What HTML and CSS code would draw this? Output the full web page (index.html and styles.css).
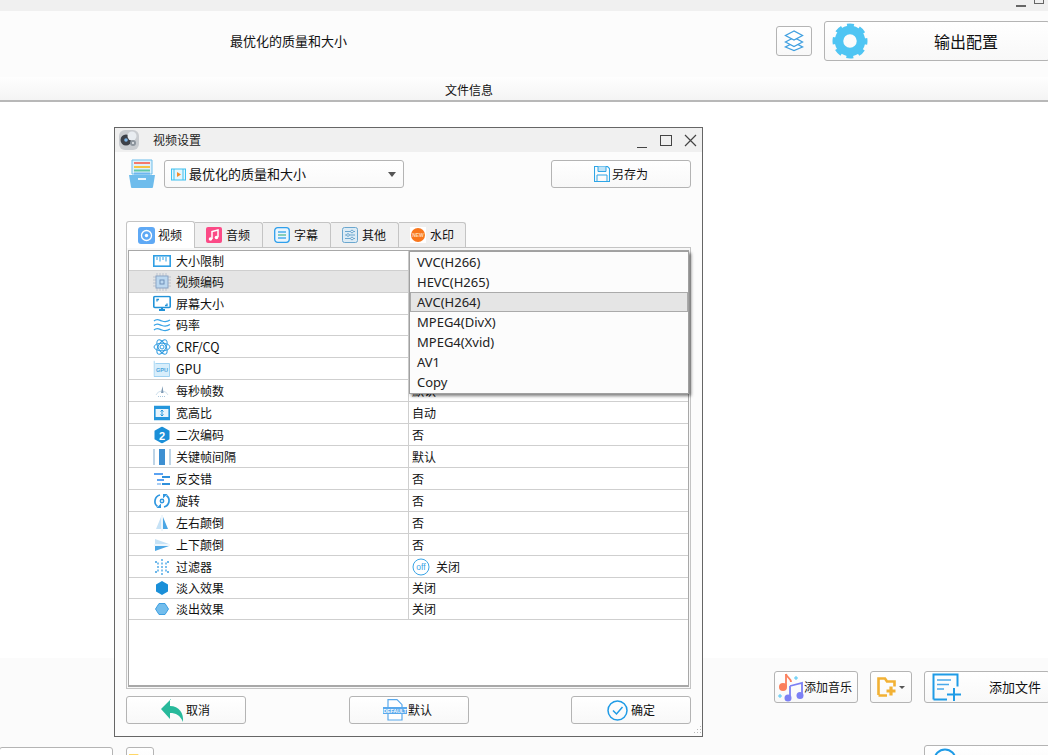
FILE: index.html
```html
<!DOCTYPE html>
<html lang="zh">
<head>
<meta charset="utf-8">
<title>视频设置</title>
<link rel="stylesheet" href="styles.css">
</head>
<body>
<div class="app">
  <header class="winbar">
    <span class="win-min"></span><span class="win-max"></span>
  </header>
  <section class="top">
    <div class="profile-name">最优化的质量和大小</div>
    <button class="btn layers-btn">
      <svg width="24" height="24" viewBox="0 0 24 24" fill="#fff" stroke="#3f9fe0" stroke-width="1.3"><path d="M12 15.500 3.500 20 12 23.500 20.500 20z" transform="translate(0 -2)"/><path d="M12 8.500 3.500 13 12 17.500 20.500 13z"/><path d="M12 2 3.500 6.500 12 11 20.500 6.500z"/></svg>
    </button>
    <button class="btn output-btn">
      <svg class="gear" width="36" height="36" viewBox="0 0 36 36"><circle cx="18" cy="18" r="11" fill="none" stroke="#4fc5f3" stroke-width="8.500"/><circle cx="18" cy="18" r="15.500" fill="none" stroke="#4fc5f3" stroke-width="4" stroke-dasharray="6.800 5.370" stroke-dashoffset="3.400"/></svg>
      <span class="output-label">输出配置</span>
    </button>
  </section>
  <div class="file-tab">文件信息</div>
  <main class="middle"></main>
  <section class="bottom">
    <div class="actions">
      <button class="btn music-btn">
        <svg width="26" height="30" viewBox="0 0 26 30"><path d="M8 2v13" stroke="#fb7f5c" stroke-width="1.800" fill="none"/><path d="M8 2c1 4 5 4 5 8" stroke="#fb7f5c" stroke-width="1.800" fill="none"/><circle cx="5" cy="15" r="4" fill="#fb7f5c"/><path d="M12 14l12-3v13M12 14v12" stroke="#7c80f4" stroke-width="1.800" fill="none"/><circle cx="10" cy="26" r="3.500" fill="#7c80f4"/><circle cx="22" cy="23.500" r="3.500" fill="#7c80f4"/><path d="M18 4v4M16 6h4M2 22v4M0 24h4" stroke="#4fc5f3" stroke-width="1"/></svg>
        <span>添加音乐</span>
      </button>
      <button class="btn folder-btn">
        <svg width="20" height="20" viewBox="0 0 20 20"><path d="M1.500 18V1.500h6.500l2 3h7.500v5M10 18.500H1.500" fill="none" stroke="#f2b134" stroke-width="2.600"/><path d="M14 9.500v9M9.500 14h9" stroke="#f2b134" stroke-width="3.200"/></svg>
        <span class="caret small"></span>
      </button>
      <button class="btn addfile-btn">
        <svg width="30" height="28" viewBox="0 0 30 28" fill="none" stroke="#1f9be6"><path d="M1.500 26.500V1.500h24v12M1.500 26.500H15" stroke-width="2"/><path d="M5 7h14M5 11.500h12M5 16h7" stroke-width="1.600" stroke="#4aa9ea"/><path d="M22 15v13M15 21.500h14" stroke-width="2"/></svg>
        <span class="addfile-label">添加文件</span>
      </button>
    </div>
    <div class="footer-row">
      <div class="path-input"></div>
      <button class="btn open-btn">
        <svg width="24" height="20" viewBox="0 0 24 20"><path d="M1 20V3h9l2 3h11v14z" fill="#ffd766"/></svg>
      </button>
      <button class="btn start-btn">
        <svg width="24" height="24" viewBox="0 0 24 24"><circle cx="12" cy="12" r="10.500" fill="none" stroke="#1f9be6" stroke-width="2"/></svg>
      </button>
    </div>
  </section>

  <div class="dialog">
    <div class="dlg-title">
      <svg class="dlg-logo" width="22" height="22" viewBox="0 0 22 22"><rect x="1" y="1" width="20" height="20" rx="6" fill="#c9ccd0"/><circle cx="8" cy="11" r="5.500" fill="#3c4048"/><circle cx="14" cy="7" r="4.500" fill="#e9edf1"/><circle cx="8" cy="11" r="1.800" fill="#7fb6e8"/><circle cx="15" cy="14" r="3" fill="#8c949c"/><circle cx="15" cy="14" r="1" fill="#eef1f4"/></svg>
      <span class="dlg-caption">视频设置</span>
      <span class="dlg-min"></span>
      <span class="dlg-max"></span>
      <svg class="dlg-close" width="13" height="13" viewBox="0 0 13 13" stroke="#444" stroke-width="1.200"><path d="M1 1l11 11M12 1 1 12"/></svg>
    </div>
    <div class="dlg-body">
      <div class="profile-row">
        <svg class="tray" width="30" height="30" viewBox="0 0 30 30"><path d="M5 1h20v14H5z" fill="#dff1fb" stroke="#6cbdea"/><path d="M7 4h16" stroke="#f47a6c" stroke-width="2"/><path d="M7 8h16" stroke="#f5c443" stroke-width="2"/><path d="M7 11.500h16" stroke="#5fc7a8" stroke-width="2"/><path d="M7 14.500h16" stroke="#6cb6ef" stroke-width="2"/><path d="M2 16h26l-2 12a1 1 0 0 1-1 1H5a1 1 0 0 1-1-1z" fill="#6ebcec"/><rect x="11" y="19" width="8" height="2" fill="#eaf6fd"/></svg>
        <div class="combo">
          <svg width="15" height="15" viewBox="0 0 15 15"><rect x=".5" y="2" width="14" height="11" fill="#e4f6fd" stroke="#3fc0ef"/><path d="M3 2v11M12 2v11" stroke="#3fc0ef"/><path d="M6 5v5l4-2.500z" fill="#f58a2a"/></svg>
          <span class="combo-text">最优化的质量和大小</span>
          <span class="caret"></span>
        </div>
        <button class="btn save-btn">
          <svg width="16" height="16" viewBox="0 0 16 16" fill="none" stroke="#2ea5e6"><path d="M.5 .5h13l2 2v13H.5z" stroke-width="1.100"/><path d="M4 .5v5h8v-5" fill="#bfe3f7"/><path d="M3 15.500V9h10v6.500"/></svg>
          <span>另存为</span>
        </button>
      </div>

      <div class="tabs">
        <div class="tab active">
          <svg width="17" height="17" viewBox="0 0 17 17"><rect width="17" height="17" rx="3" fill="#5fa9f5"/><circle cx="8.500" cy="8.500" r="5" fill="none" stroke="#fff" stroke-width="1.300"/><circle cx="8.500" cy="8.500" r="1.700" fill="#fff"/></svg>
          <span>视频</span>
        </div>
        <div class="tab">
          <svg width="16" height="16" viewBox="0 0 16 16"><rect width="16" height="16" rx="2" fill="#fb4a86"/><path d="M6 12V4.500l6-1.500v7" fill="none" stroke="#fff" stroke-width="1.500"/><circle cx="4.500" cy="12" r="1.800" fill="#fff"/><circle cx="10.500" cy="10.500" r="1.800" fill="#fff"/></svg>
          <span>音频</span>
        </div>
        <div class="tab">
          <svg width="16" height="16" viewBox="0 0 16 16" fill="none"><rect x=".7" y=".7" width="14.600" height="14.600" rx="3" fill="#eaf5fd" stroke="#2e9fec" stroke-width="1.300"/><path d="M4 5h8" stroke="#2e9fec" stroke-width="1.300"/><path d="M4 8h8" stroke="#53b98f" stroke-width="1.300"/><path d="M4 11h8" stroke="#2e9fec" stroke-width="1.300"/></svg>
          <span>字幕</span>
        </div>
        <div class="tab">
          <svg width="16" height="16" viewBox="0 0 16 16" fill="none" stroke="#6ba7cf"><rect x=".5" y=".5" width="15" height="15" rx="2" fill="#dcebf5"/><path d="M3 4.500h10M3 8h10M3 11.500h10"/><circle cx="10" cy="4.500" r="1.300" fill="#fff"/><circle cx="6" cy="8" r="1.300" fill="#fff"/><circle cx="10" cy="11.500" r="1.300" fill="#fff"/></svg>
          <span>其他</span>
        </div>
        <div class="tab">
          <svg width="16" height="16" viewBox="0 0 16 16"><rect width="16" height="16" fill="#fff"/><circle cx="8" cy="8" r="7" fill="#f9761c"/><text x="8" y="9.800" font-size="5" fill="#ffd9b8" text-anchor="middle" font-family="Liberation Sans" font-weight="700">NEW</text></svg>
          <span>水印</span>
        </div>
      </div>

      <div class="pane">
        <div class="grid">
          <div class="row first"><div class="cell name"><svg width="18" height="14" viewBox="0 0 18 14" fill="none" stroke="#2f9fe4"><rect x=".8" y="1.800" width="16.400" height="10.400" stroke-width="1.600"/><path d="M4 3v3M7 3v4.500M10 3v3M13 3v4.500" stroke-width="1"/></svg><span>大小限制</span></div><div class="cell val"></div></div>
          <div class="row current"><div class="cell name"><svg width="18" height="18" viewBox="0 0 18 18" fill="none"><path d="M0 4h18M0 7h18M0 10h18M0 13h18M4 0v18M7 0v18M10 0v18M13 0v18" stroke="#a9b4c6" stroke-width=".7"/><rect x="3" y="3" width="12" height="12" fill="#bcd8f0" stroke="#8aa3c4"/><rect x="7" y="7" width="4" height="4" stroke="#6f8fb8"/></svg><span>视频编码</span></div><div class="cell val"></div></div>
          <div class="row"><div class="cell name"><svg width="18" height="17" viewBox="0 0 18 17" fill="none" stroke="#2092d8"><rect x=".8" y="1" width="16.400" height="11" rx="1" stroke-width="1.600"/><path d="M6 14.500h6" stroke-width="2"/><path d="M9 12v2" stroke-width="2"/><path d="M4 6V4h2M14 8v2h-2" stroke-width="1.300"/></svg><span>屏幕大小</span></div><div class="cell val"></div></div>
          <div class="row short"><div class="cell name"><svg width="18" height="14" viewBox="0 0 18 14" fill="none" stroke="#3aa4e6" stroke-width="1.300"><path d="M1 3c3-3 5-1 8 0s5 1 8-1M1 7.500c3-3 5-1 8 0s5 1 8-1M1 12c3-3 5-1 8 0s5 1 8-1"/></svg><span>码率</span></div><div class="cell val"></div></div>
          <div class="row"><div class="cell name"><svg width="18" height="18" viewBox="0 0 18 18" fill="none" stroke="#2f9be0"><ellipse cx="9" cy="9" rx="8" ry="3.800"/><ellipse cx="9" cy="9" rx="8" ry="3.800" transform="rotate(60 9 9)"/><ellipse cx="9" cy="9" rx="8" ry="3.800" transform="rotate(120 9 9)"/><circle cx="9" cy="9" r="2"/></svg><span class="latin">CRF/CQ</span></div><div class="cell val"></div></div>
          <div class="row"><div class="cell name"><svg width="17" height="17" viewBox="0 0 17 17"><path d="M.5 0v16H16V3H2" fill="#d8eefb" stroke="#9fd2f2"/><text x="8.500" y="11.500" font-size="5.500" fill="#4aa3dc" text-anchor="middle" font-family="Liberation Sans" font-weight="700">GPU</text></svg><span class="latin">GPU</span></div><div class="cell val"></div></div>
          <div class="row"><div class="cell name"><svg width="16" height="14" viewBox="0 0 16 14" fill="none"><path d="M2 11a6.500 6.500 0 0 1 12 0" stroke="#cfe0ec"/><path d="M8.500 2 7 9h2.500z" fill="#7f9ab4"/><path d="M4 12.500h8" stroke="#a8c6dc" stroke-dasharray="1 1"/></svg><span>每秒帧数</span></div><div class="cell val">默认</div></div>
          <div class="row"><div class="cell name"><svg width="16" height="15" viewBox="0 0 16 15"><rect x=".8" y=".8" width="14.400" height="13.400" fill="#e8f4fc" stroke="#2596dc" stroke-width="1.600"/><path d="M1 1h14v2.500H1zM1 11.500h14V14H1z" fill="#2596dc"/><path d="M8 4.500v6M6.500 6 8 4.500 9.500 6M6.500 9 8 10.500 9.500 9" fill="none" stroke="#2596dc"/></svg><span>宽高比</span></div><div class="cell val">自动</div></div>
          <div class="row"><div class="cell name"><svg width="16" height="17" viewBox="0 0 16 17"><path d="M8 0 15.500 4.300v8.400L8 17 .5 12.700V4.300z" fill="#1a8fd8"/><text x="8" y="13" font-size="11" fill="#fff" text-anchor="middle" font-family="Liberation Sans" font-weight="700">2</text></svg><span>二次编码</span></div><div class="cell val">否</div></div>
          <div class="row"><div class="cell name"><svg width="18" height="18" viewBox="0 0 18 18"><path d="M1 1v16M17 1v16" stroke="#a9c6de" stroke-width="1.500"/><rect x="6" y="1" width="6" height="16" fill="#3d8fd1"/></svg><span>关键帧间隔</span></div><div class="cell val">默认</div></div>
          <div class="row"><div class="cell name"><svg width="16" height="14" viewBox="0 0 16 14" stroke-width="2" fill="none"><path d="M0 2h9" stroke="#5aa2f2"/><path d="M8 5h8" stroke="#2f90dc"/><path d="M3 8h7" stroke="#5aa2f2"/><path d="M8 12h8" stroke="#2f90dc"/><path d="M3 12h4" stroke="#a7cdf5"/></svg><span>反交错</span></div><div class="cell val">否</div></div>
          <div class="row"><div class="cell name"><svg width="17" height="17" viewBox="0 0 17 17" fill="none" stroke="#2f97e0" stroke-width="1.700"><path d="M6.500 2.500A6.500 6.500 0 0 0 4 14"/><path d="M10.500 14.500A6.500 6.500 0 0 0 13 3"/><path d="M3 15.500h4.500V11zM14 1.500H9.500V6z" fill="#2f97e0" stroke="none"/><circle cx="8.500" cy="8.500" r="1.700" stroke-width="1.500"/></svg><span>旋转</span></div><div class="cell val">否</div></div>
          <div class="row"><div class="cell name"><svg width="16" height="16" viewBox="0 0 16 16"><path d="M7 2 2 14h5z" fill="#c6e2f6"/><path d="M9 2l5 12H9z" fill="#4ba6e4"/><path d="M8 0v16" stroke="#dcecf8"/></svg><span>左右颠倒</span></div><div class="cell val">否</div></div>
          <div class="row"><div class="cell name"><svg width="16" height="16" viewBox="0 0 16 16"><path d="M1 2v5h14z" fill="#c6e2f6"/><path d="M1 14V9h14z" fill="#4ba6e4"/><path d="M0 8h16" stroke="#dcecf8"/></svg><span>上下颠倒</span></div><div class="cell val">否</div></div>
          <div class="row"><div class="cell name"><svg width="16" height="16" viewBox="0 0 16 16" fill="none" stroke="#3a9fe4" stroke-width="1.300" stroke-dasharray="2 1.500"><path d="M8 0v16"/><path d="M1 3h3v10H1M15 3h-3v10h3"/></svg><span>过滤器</span></div><div class="cell val off"><svg width="18" height="18" viewBox="0 0 18 18"><circle cx="9" cy="9" r="8" fill="#fff" stroke="#3aa4e6"/><text x="9" y="12" font-size="8.500" fill="#3aa4e6" text-anchor="middle" font-family="Liberation Sans">off</text></svg><span>关闭</span></div></div>
          <div class="row short"><div class="cell name"><svg width="14" height="14" viewBox="0 0 14 14"><path d="M7 0 13 3.500v7L7 14 1 10.500v-7z" fill="#1a8fd8"/></svg><span>淡入效果</span></div><div class="cell val">关闭</div></div>
          <div class="row short"><div class="cell name"><svg width="14" height="14" viewBox="0 0 14 14"><path d="M4 1.500h6L13.500 7 10 12.500H4L.5 7z" fill="#73bdec" stroke="#3f9fe0" stroke-linejoin="round"/></svg><span>淡出效果</span></div><div class="cell val">关闭</div></div>
        </div>
      </div>

      <div class="dlg-actions">
        <button class="btn act-btn back">
          <svg width="24" height="24" viewBox="0 0 24 24"><path d="M10 0 0 10l9 10v-6c6 0 10 2 13 9 1-9-4-16-13-16V0z" fill="#28b99b" transform="translate(1 1)"/></svg>
          <span>取消</span>
        </button>
        <button class="btn act-btn tight">
          <svg width="24" height="22" viewBox="0 0 24 22"><path d="M5 8V.7h9l5 5V8M5 15v6h14v-6" fill="#fff" stroke="#5aa9ec" stroke-width="1.200"/><rect y="8" width="24" height="7" fill="#5aa9ec"/><text x="12" y="13.500" font-size="5.200" fill="#fff" text-anchor="middle" font-family="Liberation Sans" font-weight="700">DEFAULT</text></svg>
          <span>默认</span>
        </button>
        <button class="btn act-btn wide">
          <svg width="21" height="21" viewBox="0 0 21 21" fill="none" stroke="#1f9be6"><circle cx="10.500" cy="10.500" r="9.500" stroke-width="1.500"/><path d="M6 10.500l3.500 3.500 6-7" stroke-width="1.500"/></svg>
          <span>确定</span>
        </button>
      </div>
    </div>
    <svg class="grip" width="10" height="10" viewBox="0 0 10 10" fill="#b8b8b8"><rect x="8" y="0" width="1" height="1"/><rect x="5" y="3" width="1" height="1"/><rect x="8" y="3" width="1" height="1"/><rect x="2" y="6" width="1" height="1"/><rect x="5" y="6" width="1" height="1"/><rect x="8" y="6" width="1" height="1"/></svg>

    <ul class="popup">
      <li>VVC(H266)</li>
      <li>HEVC(H265)</li>
      <li class="selected">AVC(H264)</li>
      <li>MPEG4(DivX)</li>
      <li>MPEG4(Xvid)</li>
      <li>AV1</li>
      <li>Copy</li>
    </ul>
  </div>
</div>
</body>
</html>
```
FILE: styles.css
```css
* { box-sizing: border-box; }
html, body { margin: 0; padding: 0; }
body {
  width: 1048px;
  height: 755px;
  overflow: hidden;
  background: #fff;
  color: #111;
  font: 12px/18px "Noto Sans CJK SC", "Noto Sans", sans-serif;
}
.app { position: relative; width: 1048px; height: 755px; display: flex; flex-direction: column; overflow: hidden; }
svg { flex: none; display: block; }

.btn {
  display: flex;
  flex: none;
  align-items: center;
  justify-content: center;
  margin: 0;
  padding: 0;
  color: #111;
  font: inherit;
  border: 1px solid #b4b4b4;
  border-radius: 3px;
  background: linear-gradient(#ffffff, #f8f8f8);
}

/* main window */
.winbar {
  height: 11px;
  flex: none;
  background: #f0f0f0;
  display: flex;
  justify-content: flex-end;
  padding-right: 4px;
}
.win-min { width: 10px; height: 2px; margin: 5px 8px 0 0; background: #666; }
.win-max { width: 10px; height: 4px; border: 1px solid #666; border-top: 0; }
.top {
  height: 66px;
  flex: none;
  background: #fcfcfc;
  display: flex;
  align-items: center;
  padding-left: 230px;
}
.profile-name { flex: 1; margin-top: -6px; font-size: 13px; }
.layers-btn { width: 36px; height: 30px; margin-top: -7px; margin-right: 12px; }
.output-btn {
  width: 226px;
  height: 40px;
  margin: -7px -2px 0 0;
  justify-content: flex-start;
  padding-left: 7px;
}
.output-label { font-size: 16px; margin-left: 66px; }
.file-tab {
  height: 25px;
  flex: none;
  text-align: center;
  line-height: 26px;
  padding-right: 110px;
  background: linear-gradient(#fefefe, #f4f4f4);
  border-bottom: 2px solid #b8b8b8;
}
.middle { flex: 1; background: #fff; }
.bottom {
  height: 97px;
  flex: none;
  background: #fbfbfb;
  display: flex;
  flex-direction: column;
  padding-top: 13px;
}
.actions { display: flex; justify-content: flex-end; height: 32px; gap: 12px; margin-right: -2px; }
.music-btn { width: 84px; padding-left: 3px; justify-content: flex-start; }
.folder-btn { width: 42px; gap: 2px; }
.addfile-btn { width: 126px; justify-content: flex-start; padding-left: 7px; }
.addfile-label { margin-left: 27px; font-size: 13px; }
.footer-row { display: flex; align-items: flex-start; margin-top: 42px; }
.path-input { flex: none; width: 114px; height: 30px; margin-top: 2px; margin-left: -1px; border: 1px solid #b4b4b4; border-radius: 3px; background: #fff; }
.open-btn { width: 28px; height: 30px; margin: 2px 0 0 13px; align-items: flex-start; padding-top: 3px; }
.start-btn { width: 130px; height: 30px; margin-left: 770px; justify-content: flex-start; align-items: flex-start; padding: 2px 0 0 8px; }
.caret { width: 0; height: 0; border: 4px solid transparent; border-top: 5px solid #555; border-bottom: 0; }
.caret.small { border-width: 3px 3px 0; border-top-color: #555; }

/* dialog window */
.dialog {
  position: absolute;
  left: 114px;
  top: 127px;
  width: 589px;
  height: 610px;
  display: flex;
  flex-direction: column;
  border: 1px solid #666;
  background: #fcfcfc;
}
.dlg-title {
  height: 24px;
  flex: none;
  display: flex;
  align-items: center;
  background: #f0f0f0;
  padding-left: 3px;
  color: #222;
}
.dlg-caption { margin-left: 13px; flex: 1; }
.dlg-min { width: 10px; height: 1px; background: #444; margin: 14px 13px 0 0; }
.dlg-max { width: 12px; height: 11px; border: 1px solid #444; margin-right: 12px; }
.dlg-close { margin-right: 5px; }
.dlg-body { flex: 1; display: flex; flex-direction: column; padding: 8px 11px 0; }
.profile-row { display: flex; align-items: flex-start; height: 61px; padding-left: 1px; }
.tray { margin-right: 7px; margin-top: -1px; }
.combo {
  width: 240px;
  height: 28px;
  display: flex;
  align-items: center;
  padding: 0 7px 0 6px;
  gap: 3px;
  font-size: 13px;
  border: 1px solid #b4b4b4;
  border-radius: 3px;
  background: linear-gradient(#fff, #f9f9f9);
}
.combo-text { flex: 1; }
.save-btn { width: 140px; height: 28px; margin-left: 147px; gap: 2px; }

.tabs { display: flex; height: 26px; align-items: flex-end; position: relative; z-index: 1; }
.tab {
  width: 68px;
  height: 25px;
  display: flex;
  align-items: center;
  padding-left: 11px;
  gap: 4px;
  border: 1px solid #c4c4c4;
  border-left: 0;
  border-bottom: 0;
  border-radius: 0 3px 0 0;
  background: #f0f0f0;
}
.tab:last-child { width: 67px; }
.tab.active {
  width: 69px;
  height: 27px;
  margin-bottom: -1px;
  gap: 3px;
  border-left: 1px solid #c4c4c4;
  border-radius: 3px 3px 0 0;
  background: #fff;
}
.pane {
  height: 442px;
  flex: none;
  padding: 2px 1px 1px;
  border: 1px solid #c4c4c4;
  background: #f8f8f8;
}
.grid {
  height: 100%;
  border: 1px solid #a8a8a8;
  border-bottom-width: 2px;
  background: #fff;
}
.row {
  display: grid;
  grid-template-columns: 279px 1fr;
  height: 22px;
  border-bottom: 1px solid #cfcfcf;
}
.row.first { height: 20px; }
.row.short { height: 21px; }
.row.current { background: #e5e5e5; }
.cell { display: flex; align-items: center; min-width: 0; }
.name { position: relative; padding-left: 47px; }
.name svg { position: absolute; left: 33px; top: 50%; transform: translate(-50%, -50%); }
.latin { font-size: 12.500px; }
.val { border-left: 1px solid #cfcfcf; padding-left: 3px; }
.val.off { gap: 6px; }

.dlg-actions { display: flex; justify-content: space-between; margin-top: 7px; }
.act-btn { width: 120px; height: 28px; gap: 2px; }
.act-btn.back { padding-right: 2px; }
.act-btn.tight { gap: 1px; padding-right: 2px; }
.act-btn.wide { gap: 3px; }
.grip { position: absolute; right: 0; bottom: 0; }

/* codec dropdown */
.popup {
  position: absolute;
  left: 294px;
  top: 123px;
  width: 280px;
  height: 143px;
  margin: 0;
  padding: 0;
  font-family: "Noto Sans", "Noto Sans CJK SC", sans-serif;
  font-size: 13px;
  list-style: none;
  background: #fcfcfc;
  border: 1px solid #a0a0a0;
  box-shadow: 2px 2px 3px rgba(0, 0, 0, .5);
  color: #222;
}
.popup li { height: 20px; line-height: 20px; padding-left: 7px; }
.popup li.selected { background: #e5e5e5; outline: 1px solid #aaa; outline-offset: -1px; }
```
